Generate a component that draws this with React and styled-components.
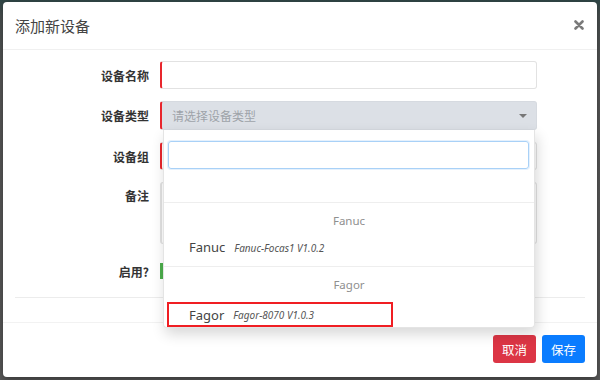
import React from "react";
import styled, { createGlobalStyle } from "styled-components";

const Global = createGlobalStyle`
  html, body { margin: 0; padding: 0; }
  body { font-family: "Noto Sans", "Noto Sans CJK SC", sans-serif; }
  #root { width: 600px; height: 380px; overflow: hidden; }
  * { box-sizing: border-box; }
`;

const Backdrop = styled.div`
  width: 600px;
  height: 380px;
  padding: 2px 3px 3px 3px;
  background: linear-gradient(180deg, #2f4646 0, #4a5151 4%, #585858 20%, #5a5a5a 100%);
`;

const Modal = styled.div`
  height: 100%;
  background: #fff;
  border-radius: 4px;
  display: flex;
  flex-direction: column;
  box-shadow: 0 3px 9px rgba(0, 0, 0, 0.4);
`;

const Header = styled.div`
  height: 48px;
  border-bottom: 1px solid #f0f0f0;
  display: flex;
  align-items: center;
  justify-content: space-between;
  padding: 0 13px 0 12px;
`;

const Title = styled.div`
  font-family: "Noto Sans CJK SC", sans-serif;
  font-size: 15px;
  color: #444;
  padding-bottom: 1px;
`;

const Close = styled.div`
  width: 10px;
  height: 10px;
  display: flex;
  margin-top: -2px;
`;

const Body = styled.div`
  flex: 1;
  padding: 11px 12px 0 12px;
  display: flex;
  flex-direction: column;
`;

const Form = styled.div`
  display: grid;
  grid-template-columns: 134px 377px;
  column-gap: 11px;
  row-gap: 12px;
  align-items: center;
`;

const Label = styled.div`
  font-family: "Noto Sans CJK SC", sans-serif;
  font-weight: 700;
  font-size: 12px;
  color: #333;
  text-align: right;
  align-self: ${(p) => (p.$top ? "start" : "center")};
  line-height: ${(p) => (p.$top ? "28px" : "normal")};
`;

const Input = styled.div`
  height: ${(p) => p.$h || 28}px;
  border: 1px solid #e2e2e2;
  border-left: 2px solid ${(p) => p.$accent || "#e2e2e2"};
  border-radius: 3px;
  background: #fff;
`;

const SelectWrap = styled.div`
  position: relative;
  z-index: 5;
`;

const Select = styled.div`
  height: 29px;
  background: #dce0e6;
  border: 1px solid #d6dae0;
  border-left: 2px solid #e8262d;
  border-radius: 3px;
  display: flex;
  align-items: center;
  justify-content: space-between;
  padding: 0 9px 0 10px;
  font-family: "Noto Sans CJK SC", sans-serif;
  font-size: 12px;
  color: #9ea3a9;
`;

const Caret = styled.span`
  width: 0;
  height: 0;
  border-left: 4px solid transparent;
  border-right: 4px solid transparent;
  border-top: 4px solid #777;
  margin-top: 1px;
`;

const Dropdown = styled.div`
  position: absolute;
  top: 100%;
  left: 3px;
  width: 372px;
  height: 198px;
  background: #fff;
  border: 1px solid #e4e4e4;
  border-top: none;
  border-radius: 0 0 4px 4px;
  box-shadow: 2px 6px 14px rgba(0, 0, 0, 0.16);
  display: flex;
  flex-direction: column;
`;

const Search = styled.div`
  margin: 11px 5px 0 4px;
  height: 28px;
  border: 1px solid #a9d1f7;
  border-radius: 3px;
  box-shadow: 0 0 0 1px rgba(180, 215, 250, 0.35);
`;

const Spacer = styled.div`
  height: 33px;
`;

const Group = styled.div`
  border-top: 1px solid #eeeeee;
  padding: 3px 0 ${(p) => (p.$last ? 0 : 8)}px;
`;

const GroupHead = styled.div`
  height: 30px;
  line-height: 30px;
  text-align: center;
  font-size: 11.5px;
  color: #8f8f8f;
  font-family: "Noto Sans", sans-serif;
`;

const Option = styled.div`
  display: flex;
  align-items: center;
  height: ${(p) => (p.$marked ? 25 : 22)}px;
  width: ${(p) => (p.$marked ? "226px" : "auto")};
  margin: ${(p) => (p.$marked ? "2px 0 0 3px" : "0")};
  padding-left: ${(p) => (p.$marked ? 20 : 25)}px;
  border: ${(p) => (p.$marked ? "2px solid #f01e23" : "none")};
`;

const OptName = styled.span`
  font-family: "Noto Sans", sans-serif;
  font-size: 13px;
  color: #444;
`;

const OptVer = styled.span`
  font-family: "Noto Sans", sans-serif;
  font-style: italic;
  font-size: 10px;
  color: #555;
  margin-left: 9px;
  padding-top: 1px;
`;

const SwitchRow = styled.div`
  height: 30px;
  display: flex;
  align-items: center;
`;

const Switch = styled.div`
  width: 60px;
  height: 16px;
  border-left: 3px solid #4cae4c;
  background: #fff;
`;

const Rule = styled.div`
  margin-top: 11px;
  border-top: 1px solid #ececec;
`;

const Footer = styled.div`
  height: 55px;
  border-top: 1px solid #f2f2f2;
  display: flex;
  justify-content: flex-end;
  align-items: flex-start;
  gap: 6px;
  padding: 12px 12px 0 0;
`;

const Button = styled.button`
  height: 28px;
  width: 43px;
  border: none;
  border-radius: 3px;
  background: ${(p) => p.$bg};
  color: #fff;
  font-family: "Noto Sans CJK SC", sans-serif;
  font-size: 12.5px;
  padding: 0;
`;

export default function App() {
  return (
    <>
      <Global />
      <Backdrop>
        <Modal>
          <Header>
            <Title>添加新设备</Title>
            <Close>
              <svg width="10" height="10" viewBox="0 0 10 10">
                <path d="M1.5 1.5 L8.5 8.5 M8.5 1.5 L1.5 8.5" stroke="#7a7a7a" strokeWidth="2.6" strokeLinecap="round" />
              </svg>
            </Close>
          </Header>
          <Body>
            <Form>
              <Label>设备名称</Label>
              <Input $accent="#e8262d" />

              <Label>设备类型</Label>
              <SelectWrap>
                <Select>
                  <span>请选择设备类型</span>
                  <Caret />
                </Select>
                <Dropdown>
                  <Search />
                  <Spacer />
                  <Group>
                    <GroupHead>Fanuc</GroupHead>
                    <Option>
                      <OptName>Fanuc</OptName>
                      <OptVer>Fanuc-Focas1 V1.0.2</OptVer>
                    </Option>
                  </Group>
                  <Group $last>
                    <GroupHead>Fagor</GroupHead>
                    <Option $marked>
                      <OptName>Fagor</OptName>
                      <OptVer>Fagor-8070 V1.0.3</OptVer>
                    </Option>
                  </Group>
                </Dropdown>
              </SelectWrap>

              <Label>设备组</Label>
              <Input $accent="#e8262d" />

              <Label $top>备注</Label>
              <Input $h={62} />

              <Label>启用?</Label>
              <SwitchRow>
                <Switch />
              </SwitchRow>
            </Form>
            <Rule />
          </Body>
          <Footer>
            <Button $bg="#dc3545">取消</Button>
            <Button $bg="#0a7cff">保存</Button>
          </Footer>
        </Modal>
      </Backdrop>
    </>
  );
}
